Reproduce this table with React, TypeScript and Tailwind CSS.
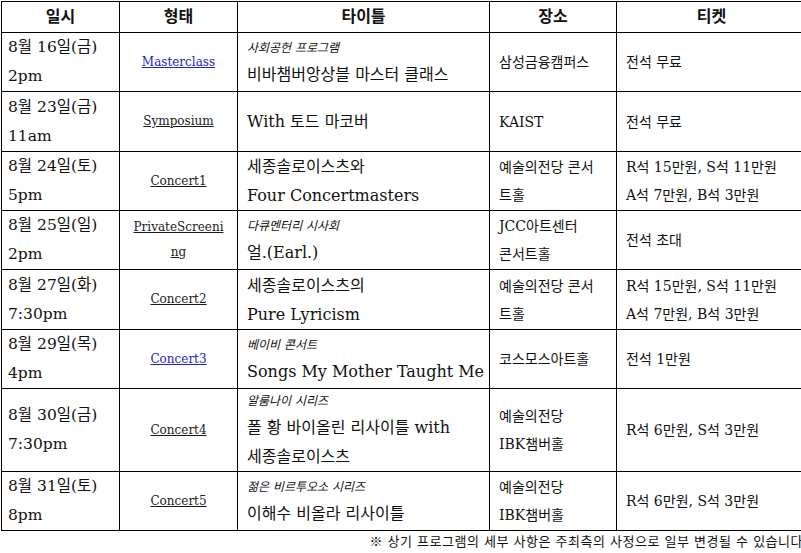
import React from "react";

type Row = {
  date: string;
  time: string;
  link: string[];
  linkBlue?: boolean;
  sub?: string;
  title: string[];
  venue: string[];
  ticket: string[];
  h: string;
};

const rows: Row[] = [
  {
    date: "8월 16일(금)",
    time: "2pm",
    link: ["Masterclass"],
    linkBlue: true,
    sub: "사회공헌 프로그램",
    title: ["비바챔버앙상블 마스터 클래스"],
    venue: ["삼성금융캠퍼스"],
    ticket: ["전석 무료"],
    h: "h-[59px]",
  },
  {
    date: "8월 23일(금)",
    time: "11am",
    link: ["Symposium"],
    title: ["With 토드 마코버"],
    venue: ["KAIST"],
    ticket: ["전석 무료"],
    h: "h-[60px]",
  },
  {
    date: "8월 24일(토)",
    time: "5pm",
    link: ["Concert1"],
    title: ["세종솔로이스츠와", "Four Concertmasters"],
    venue: ["예술의전당 콘서", "트홀"],
    ticket: ["R석 15만원, S석 11만원", "A석 7만원, B석 3만원"],
    h: "h-[59px]",
  },
  {
    date: "8월 25일(일)",
    time: "2pm",
    link: ["PrivateScreeni", "ng"],
    sub: "다큐멘터리 시사회",
    title: ["얼.(Earl.)"],
    venue: ["JCC아트센터", "콘서트홀"],
    ticket: ["전석 초대"],
    h: "h-[59px]",
  },
  {
    date: "8월 27일(화)",
    time: "7:30pm",
    link: ["Concert2"],
    title: ["세종솔로이스츠의", "Pure Lyricism"],
    venue: ["예술의전당 콘서", "트홀"],
    ticket: ["R석 15만원, S석 11만원", "A석 7만원, B석 3만원"],
    h: "h-[60px]",
  },
  {
    date: "8월 29일(목)",
    time: "4pm",
    link: ["Concert3"],
    linkBlue: true,
    sub: "베이비 콘서트",
    title: ["Songs My Mother Taught Me"],
    venue: ["코스모스아트홀"],
    ticket: ["전석 1만원"],
    h: "h-[59px]",
  },
  {
    date: "8월 30일(금)",
    time: "7:30pm",
    link: ["Concert4"],
    sub: "알룸나이 시리즈",
    title: ["폴 황 바이올린 리사이틀 with", "세종솔로이스츠"],
    venue: ["예술의전당", "IBK챔버홀"],
    ticket: ["R석 6만원, S석 3만원"],
    h: "h-[83px]",
  },
  {
    date: "8월 31일(토)",
    time: "8pm",
    link: ["Concert5"],
    sub: "젊은 비르투오소 시리즈",
    title: ["이해수 비올라 리사이틀"],
    venue: ["예술의전당", "IBK챔버홀"],
    ticket: ["R석 6만원, S석 3만원"],
    h: "h-[59px]",
  },
];

const cell = "border-r border-b border-black flex flex-col justify-center";
const head = "border-r border-b border-black flex items-center justify-center h-[31px] text-[16px] font-bold";

function Lines({ lines, lh }: { lines: string[]; lh: string }) {
  return (
    <>
      {lines.map((l, i) => (
        <div key={i} className={`${lh} whitespace-nowrap`}>
          {l}
        </div>
      ))}
    </>
  );
}

export default function App() {
  return (
    <div
      className="w-[801px] h-[553px] overflow-hidden bg-white text-[#111]"
      style={{ fontFamily: '"DejaVu Serif", "Noto Sans CJK KR", serif' }}
    >
      <div className="w-[806px] pl-[1px] pt-[1px]">
        <div className="grid grid-cols-[118px_118px_252px_127px_190px] border-l border-t border-black">
          <div className={head}>일시</div>
          <div className={head}>형태</div>
          <div className={head}>타이틀</div>
          <div className={head}>장소</div>
          <div className={head}>티켓</div>

          {rows.map((r, i) => (
            <React.Fragment key={i}>
              <div className={`${cell} ${r.h} pl-[6px] text-[15.5px]`}>
                <div className="leading-[29px] whitespace-nowrap">{r.date}</div>
                <div className="leading-[29px]">{r.time}</div>
              </div>
              <div className={`${cell} ${r.h} items-center text-[12px]`}>
                <div className={`underline text-center ${r.linkBlue ? "text-[#2323c8]" : "text-[#1a1a1a]"}`}>
                  <Lines lines={r.link} lh="leading-[25px]" />
                </div>
              </div>
              <div className={`${cell} ${r.h} pl-[9px] text-[16px]`}>
                {r.sub ? <div className="text-[12px] italic leading-[24px]">{r.sub}</div> : null}
                <Lines lines={r.title} lh="leading-[29px]" />
              </div>
              <div className={`${cell} ${r.h} pl-[9px] text-[14px]`}>
                <Lines lines={r.venue} lh="leading-[28px]" />
              </div>
              <div className={`${cell} ${r.h} pl-[9px] text-[14px]`}>
                <Lines lines={r.ticket} lh="leading-[28px]" />
              </div>
            </React.Fragment>
          ))}
        </div>
        <p className="h-[22px] pr-[3px] text-right text-[13px] leading-[22px] tracking-[0.5px] whitespace-nowrap">
          ※ 상기 프로그램의 세부 사항은 주최측의 사정으로 일부 변경될 수 있습니다
        </p>
      </div>
    </div>
  );
}
